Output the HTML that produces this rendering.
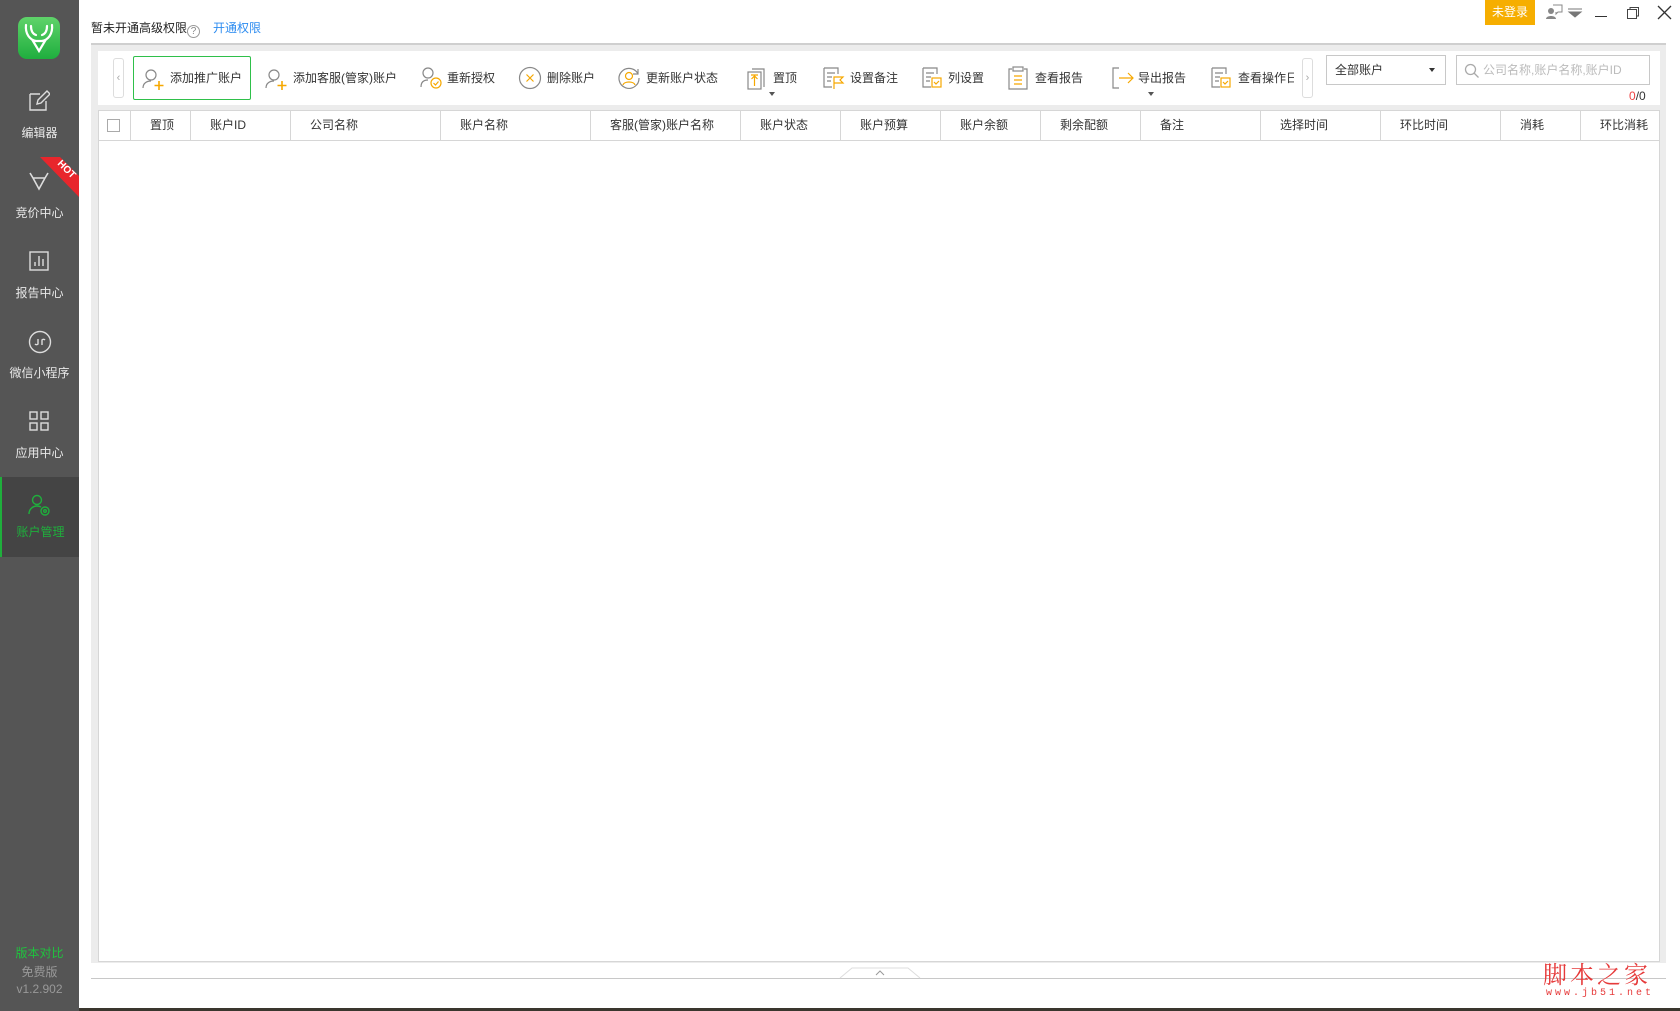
<!DOCTYPE html>
<html><head><meta charset="utf-8"><style>
*{margin:0;padding:0;box-sizing:border-box}
body{width:1680px;height:1011px;position:relative;overflow:hidden;background:#fff;font-family:"Liberation Sans","Noto Sans CJK SC",sans-serif;font-size:12px;color:#333}
.a{position:absolute}
#side{left:0;top:0;width:79px;height:1011px;background:#555;overflow:hidden}
.it{position:absolute;left:0;width:79px;height:80px;text-align:center;color:#e8e8e8;font-size:12px}
.it svg{position:absolute;left:28px;top:14px}
.it span{position:absolute;left:0;right:0;top:48px}
.tb{position:absolute;top:60px;height:36px;line-height:36px;font-size:12px;color:#333;white-space:nowrap}
.th{position:absolute;top:110px;height:30px;line-height:30px;border-left:1px solid #d6d6d6;text-align:left;padding-left:19px;font-size:12px;color:#333;white-space:nowrap}
</style></head><body>
<div id="side" class="a">
 <div class="a" style="left:18px;top:17px;width:42px;height:42px;border-radius:9px;background:linear-gradient(#5fd36a,#1fae3e)">
  <svg width="42" height="42" viewBox="0 0 42 42" fill="none" stroke="#fff" stroke-width="2.2" stroke-linecap="round"><path d="M8 8c-1 9 4 15 10 16M34 8c1 9-4 15-10 16M13 9c0 5 2 8 5 9M29 9c0 5-2 8-5 9M15 24l6 10 6-10z" /></svg>
 </div>
 <div class="it" style="top:76px"><svg width="22" height="22" viewBox="0 0 22 22" fill="none" stroke="#ddd" stroke-width="1.4"><path d="M2 4h10M2 4v16h16v-9M9 14l1-4 9-9 3 3-9 9z"/></svg><span>编辑器</span></div>
 <div class="it" style="top:156px"><svg width="22" height="22" viewBox="0 0 22 22" fill="none" stroke="#ddd" stroke-width="1.6"><path d="M2 3l3 5M20 3l-3 5M5 8h12M5 8l6 11 6-11"/></svg><span>竞价中心</span></div>
 <svg class="a" style="left:0;top:140px" width="79" height="70"><polygon points="40,17 60,17 79,36 79,57" fill="#e8262c"/><text x="0" y="0" fill="#fff" font-size="10" font-weight="bold" font-family="Liberation Sans" transform="translate(57,24) rotate(45)">HOT</text></svg>
 <div class="it" style="top:236px"><svg width="22" height="22" viewBox="0 0 22 22" fill="none" stroke="#ddd" stroke-width="1.4"><rect x="2" y="2" width="18" height="18"/><path d="M7 16v-4M11 16V6M15 16v-7"/></svg><span>报告中心</span></div>
 <div class="it" style="top:316px"><svg width="24" height="24" viewBox="0 0 24 24" fill="none" stroke="#ddd" stroke-width="1.4"><circle cx="12" cy="12" r="10.5"/><path d="M10 9v5a2 2 0 0 1-3 0M14 15V10a2 2 0 0 1 3 0"/></svg><span>微信小程序</span></div>
 <div class="it" style="top:396px"><svg width="22" height="22" viewBox="0 0 22 22" fill="none" stroke="#ddd" stroke-width="1.4"><rect x="2" y="2" width="7" height="7"/><rect x="13" y="2" width="7" height="7"/><rect x="2" y="13" width="7" height="7"/><rect x="13" y="13" width="7" height="7"/></svg><span>应用中心</span></div>
 <div class="it" style="top:477px;background:#444;border-left:2px solid #1faf3c;color:#1faf3c"><svg width="24" height="24" viewBox="0 0 24 24" fill="none" stroke="#1faf3c" stroke-width="1.4" style="left:26px;top:16px"><circle cx="9" cy="7" r="4.5"/><path d="M1 21c0-5 4-8 8-8 2 0 3 .5 4 1"/><circle cx="17" cy="18" r="4"/><circle cx="17" cy="18" r="1.3"/></svg><span style="top:46px">账户管理</span></div>
 <div class="a" style="left:0;width:79px;top:944px;text-align:center;color:#1fc43e;font-size:12px">版本对比</div>
 <div class="a" style="left:0;width:79px;top:963px;text-align:center;color:#999;font-size:12px">免费版</div>
 <div class="a" style="left:0;width:79px;top:982px;text-align:center;color:#999;font-size:12px">v1.2.902</div>
</div>
<div class="a" style="left:91px;top:19px;font-size:12px;color:#222">暂未开通高级权限<span style="display:inline-block;width:13px;height:13px;border:1px solid #999;border-radius:50%;font-size:10px;line-height:11px;text-align:center;color:#888;vertical-align:-2px">?</span><span style="color:#2d8cf0;margin-left:13px">开通权限</span></div>
<div class="a" style="left:1485px;top:0;width:50px;height:25px;background:#f6ae00;color:#fff;text-align:center;line-height:25px;font-size:12px">未登录</div>
<svg class="a" style="left:1545px;top:4px" width="18" height="16" viewBox="0 0 18 16"><circle cx="6" cy="7" r="3" fill="#888"/><path d="M1 15c0-4 10-4 10 0z" fill="#888"/><path d="M8 1h9v7h-4l-2 2v-2" fill="none" stroke="#888"/></svg>
<svg class="a" style="left:1567px;top:8px" width="16" height="10"><path d="M1 1h14M2 4h12l-6 5z" stroke="#777" fill="#777"/></svg>
<div class="a" style="left:1595px;top:16px;width:12px;height:1px;background:#333"></div>
<svg class="a" style="left:1626px;top:6px" width="14" height="14" fill="none" stroke="#444"><rect x="1.5" y="3.5" width="9" height="9"/><path d="M4 3.5V1.5h8.5v8.5h-2"/></svg>
<svg class="a" style="left:1657px;top:5px" width="15" height="15" stroke="#333" stroke-width="1.3"><path d="M1 1l13 13M14 1L1 14"/></svg>
<div class="a" style="left:91px;top:43px;width:1575px;height:920px;background:#ececec;border-top:2px solid #cfcfcf"></div>
<div class="a" style="left:98px;top:51px;width:1562px;height:54px;background:#fff"></div>
<div class="a" style="left:113px;top:58px;width:11px;height:40px;border:1px solid #ddd;border-radius:3px;color:#aaa;font-size:11px;line-height:38px;text-align:center">‹</div>
<div class="a" style="left:1302px;top:58px;width:11px;height:40px;border:1px solid #ddd;border-radius:3px;color:#aaa;font-size:11px;line-height:38px;text-align:center">›</div>
<div class="a" style="left:133px;top:56px;width:118px;height:44px;border:1px solid #2fc04a;border-radius:2px"></div>
<svg class="a" style="left:142px;top:67px" width="24" height="24" fill="none" stroke-width="1.2"><circle cx="9" cy="8" r="5" stroke="#888"/><path d="M1 21c0-5 4-7 8-7" stroke="#888"/><path d="M17 14v9M12.5 18.5h9" stroke="#f6a800" stroke-width="1.6"/></svg>
<div class="tb" style="left:170px">添加推广账户</div>
<svg class="a" style="left:265px;top:67px" width="24" height="24" fill="none" stroke-width="1.2"><circle cx="9" cy="8" r="5" stroke="#888"/><path d="M1 21c0-5 4-7 8-7" stroke="#888"/><path d="M17 14v9M12.5 18.5h9" stroke="#f6a800" stroke-width="1.6"/></svg>
<div class="tb" style="left:293px">添加客服(管家)账户</div>
<svg class="a" style="left:420px;top:66px" width="24" height="24" fill="none" stroke-width="1.2"><circle cx="8" cy="7" r="5" stroke="#888"/><path d="M1 21c0-5 3-7 7-7" stroke="#888"/><circle cx="16" cy="17" r="5" stroke="#f6a800"/><path d="M13.5 17l2 2 3-3.5" stroke="#f6a800"/></svg>
<div class="tb" style="left:447px">重新授权</div>
<svg class="a" style="left:518px;top:66px" width="24" height="24" fill="none" stroke-width="1.2"><circle cx="12" cy="12" r="10.5" stroke="#888"/><path d="M8.5 8.5l7 7M15.5 8.5l-7 7" stroke="#f6a800"/></svg>
<div class="tb" style="left:547px">删除账户</div>
<svg class="a" style="left:617px;top:66px" width="24" height="24" fill="none" stroke-width="1.2"><path d="M21 8a10 10 0 1 0 1 4" stroke="#888"/><path d="M21 3v5h-5" stroke="#888"/><circle cx="12" cy="10" r="3.5" stroke="#f6a800"/><path d="M6 19c1-4 11-4 12 0" stroke="#f6a800"/></svg>
<div class="tb" style="left:646px">更新账户状态</div>
<svg class="a" style="left:747px;top:66px" width="22" height="24" fill="none" stroke-width="1.2"><path d="M5 3h12v18" stroke="#888"/><rect x="1" y="6" width="13" height="17" stroke="#888"/><path d="M7.5 20v-10M4.5 13l3-3 3 3M4 9h7" stroke="#f6a800"/></svg>
<div class="tb" style="left:773px">置顶</div>
<div class="a" style="left:769px;top:92px;width:0;height:0;border:3px solid transparent;border-top:4px solid #555"></div>
<svg class="a" style="left:822px;top:66px" width="24" height="24" fill="none" stroke-width="1.2"><path d="M2 2h14v6M2 2v19h8" stroke="#888"/><path d="M5 7h8M5 11h5M5 15h4" stroke="#888"/><path d="M12 23V11h9l-3 3 3 3h-9" stroke="#f6a800"/></svg>
<div class="tb" style="left:850px">设置备注</div>
<svg class="a" style="left:921px;top:66px" width="24" height="24" fill="none" stroke-width="1.2"><path d="M2 2h14v6M2 2v19h8" stroke="#888"/><path d="M5 7h8M5 11h5M5 15h4" stroke="#888"/><rect x="11" y="12" width="9" height="9" stroke="#f6a800"/><path d="M13 16l2 2 3-3" stroke="#f6a800"/></svg>
<div class="tb" style="left:948px">列设置</div>
<svg class="a" style="left:1008px;top:66px" width="22" height="24" fill="none" stroke-width="1.2"><path d="M4 3H1v20h18V3h-3" stroke="#888"/><rect x="5" y="1" width="10" height="4" stroke="#888"/><path d="M6 10h8M6 14h8M6 18h8" stroke="#f6a800"/></svg>
<div class="tb" style="left:1035px">查看报告</div>
<svg class="a" style="left:1111px;top:66px" width="24" height="24" fill="none" stroke-width="1.2"><path d="M8 2H2v20h6" stroke="#888"/><path d="M8 12h14M17 7l5 5-5 5" stroke="#f6a800"/></svg>
<div class="tb" style="left:1138px">导出报告</div>
<div class="a" style="left:1148px;top:92px;width:0;height:0;border:3px solid transparent;border-top:4px solid #555"></div>
<svg class="a" style="left:1210px;top:66px" width="24" height="24" fill="none" stroke-width="1.2"><path d="M2 2h14v6M2 2v19h8" stroke="#888"/><path d="M5 7h8M5 11h5M5 15h4" stroke="#888"/><rect x="11" y="12" width="9" height="9" stroke="#f6a800"/><path d="M13 16l2 2 3-3" stroke="#f6a800"/></svg>
<div class="tb" style="left:1238px;width:56px;overflow:hidden">查看操作日志</div>
<div class="a" style="left:1326px;top:55px;width:120px;height:30px;border:1px solid #c8c8c8;background:#fff;padding-left:8px;line-height:28px">全部账户<span style="position:absolute;right:10px;top:12px;border:3px solid transparent;border-top:4px solid #333"></span></div>
<div class="a" style="left:1456px;top:55px;width:194px;height:30px;border:1px solid #c8c8c8;background:#fff;line-height:28px;color:#bbb;padding-left:26px">公司名称,账户名称,账户ID
<svg style="position:absolute;left:7px;top:7px" width="16" height="16" fill="none" stroke="#aaa" stroke-width="1.3"><circle cx="6.5" cy="6.5" r="5"/><path d="M10 10l4.5 4.5"/></svg></div>
<div class="a" style="left:1629px;top:89px;font-size:12px;color:#333"><span style="color:#e44">0</span>/0</div>
<div class="a" style="left:98px;top:110px;width:1562px;height:852px;background:#fff;border:1px solid #d6d6d6"></div>
<div class="a" style="left:98px;top:140px;width:1562px;height:1px;background:#d6d6d6"></div>
<div class="a" style="left:107px;top:119px;width:13px;height:13px;border:1px solid #aaa;background:#fff"></div>
<div class="th" style="left:130px;width:60px">置顶</div>
<div class="th" style="left:190px;width:100px">账户ID</div>
<div class="th" style="left:290px;width:150px">公司名称</div>
<div class="th" style="left:440px;width:150px">账户名称</div>
<div class="th" style="left:590px;width:150px">客服(管家)账户名称</div>
<div class="th" style="left:740px;width:100px">账户状态</div>
<div class="th" style="left:840px;width:100px">账户预算</div>
<div class="th" style="left:940px;width:100px">账户余额</div>
<div class="th" style="left:1040px;width:100px">剩余配额</div>
<div class="th" style="left:1140px;width:120px">备注</div>
<div class="th" style="left:1260px;width:120px">选择时间</div>
<div class="th" style="left:1380px;width:120px">环比时间</div>
<div class="th" style="left:1500px;width:80px">消耗</div>
<div class="th" style="left:1580px;width:80px">环比消耗</div>
<div class="a" style="left:91px;top:978px;width:1575px;height:1px;background:#c8c8c8"></div>
<svg class="a" style="left:838px;top:965px" width="84" height="14"><path d="M2 13L14 3h56l12 10" fill="#fff" stroke="#ddd"/><path d="M38 10l4-4 4 4" fill="none" stroke="#999"/></svg>
<div class="a" style="left:1543px;top:955px;color:#e63a3a;font-size:24px;letter-spacing:3px;font-family:'Noto Serif CJK SC',serif;white-space:nowrap">脚本之家</div>
<div class="a" style="left:1546px;top:988px;color:#e63a3a;font-size:10px;letter-spacing:3px;font-family:'Liberation Mono',monospace;white-space:nowrap">www.jb51.net</div>
<div class="a" style="left:79px;top:1008px;width:1601px;height:3px;background:#3a362e"></div>
</body></html>
